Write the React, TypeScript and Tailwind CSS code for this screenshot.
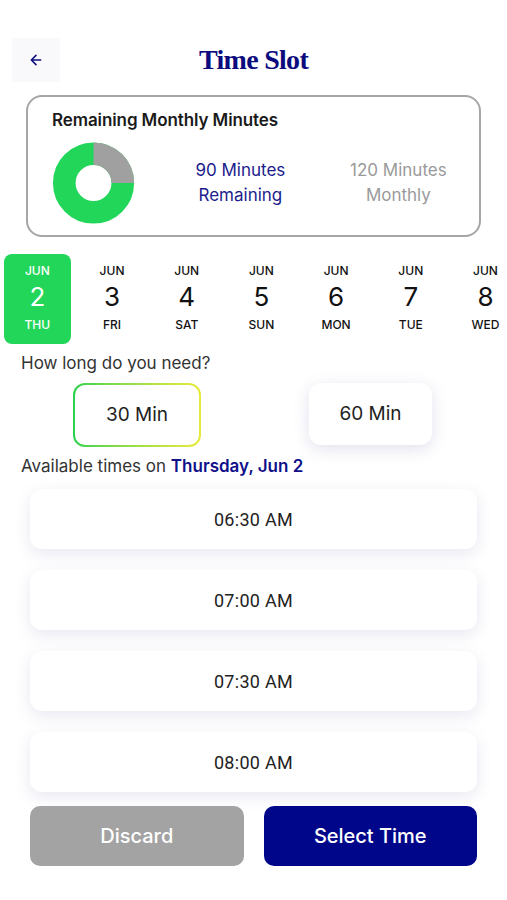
import React, { useState } from "react";

const days = [
  { n: "2", d: "THU" },
  { n: "3", d: "FRI" },
  { n: "4", d: "SAT" },
  { n: "5", d: "SUN" },
  { n: "6", d: "MON" },
  { n: "7", d: "TUE" },
  { n: "8", d: "WED" },
];

const times = ["06:30 AM", "07:00 AM", "07:30 AM", "08:00 AM"];

const Donut = () => {
  const r = 31;
  const c = 2 * Math.PI * r;
  return (
    <svg width="88" height="88" viewBox="0 0 88 88">
      <circle cx="44" cy="44" r={r} fill="none" stroke="#22d65a" strokeWidth="24" />
      <circle
        cx="44"
        cy="44"
        r={r}
        fill="none"
        stroke="#a0a0a0"
        strokeWidth="24"
        strokeDasharray={`${c * 0.25} ${c}`}
        transform="rotate(-90 44 44)"
      />
    </svg>
  );
};

const App = () => {
  const [day, setDay] = useState(0);
  const [len, setLen] = useState(30);

  return (
    <div className="w-[507px] h-[900px] bg-white overflow-hidden font-['Inter',sans-serif] text-[#222]">
      <div className="relative flex items-center justify-center h-[40px] mt-[40px]">
        <button className="absolute left-[12px] top-[-2px] w-[48px] h-[44px] bg-[#f9f9fb] flex items-center justify-center text-[#101080]">
          <svg width="16" height="16" viewBox="0 0 24 24" fill="none" stroke="currentColor" strokeWidth="2.4" strokeLinecap="round" strokeLinejoin="round">
            <path d="M19 12H5M12 19l-7-7 7-7" />
          </svg>
        </button>
        <h1 className="font-['Liberation_Serif',serif] font-bold text-[28px] text-[#0b0b7e] tracking-tight">Time Slot</h1>
      </div>

      <div className="mx-[26px] mt-[15px] h-[142px] border-2 border-[#a6a6a6] rounded-[16px] px-[24px] pt-[11px]">
        <p className="text-[17px] font-semibold text-[#1a1a1a] tracking-[-0.1px]">Remaining Monthly Minutes</p>
        <div className="flex items-center mt-[5px]">
          <Donut />
          <div className="ml-[44px] w-[130px] text-center text-[17px] leading-[25px] text-[#1c1c8c]">
            <p>90 Minutes</p>
            <p>Remaining</p>
          </div>
          <div className="ml-[40px] w-[120px] text-center text-[17px] leading-[25px] text-[#9a9a9a]">
            <p>120 Minutes</p>
            <p>Monthly</p>
          </div>
        </div>
      </div>

      <div className="flex mt-[17px]">
        {days.map((x, i) => (
          <button
            key={x.n}
            onClick={() => setDay(i)}
            className="w-[74.7px] shrink-0 px-[4px]"
          >
            <div
              className={`h-[90px] rounded-[8px] flex flex-col items-center pt-[9px] ${
                day === i ? "bg-[#22d65a] text-white" : "text-[#111]"
              }`}
            >
              <span className="text-[12px] leading-[15px] font-medium">JUN</span>
              <span className="text-[26px] leading-[36px] mt-[1px]">{x.n}</span>
              <span className="text-[12px] leading-[15px] font-medium mt-[2px]">{x.d}</span>
            </div>
          </button>
        ))}
      </div>

      <p className="ml-[21px] mt-[8px] text-[17px] leading-[22px] text-[#333]">How long do you need?</p>

      <div className="flex mt-[9px] ml-[73px] gap-[108px]">
        <button
          onClick={() => setLen(30)}
          className={`w-[128px] h-[64px] rounded-[12px] p-[2px] ${
            len === 30 ? "bg-gradient-to-r from-[#27d24e] to-[#e8ea3a]" : "bg-white shadow-[0_4px_16px_rgba(90,90,160,0.18)]"
          }`}
        >
          <div className="w-full h-full bg-white rounded-[10px] flex items-center justify-center text-[19px] text-[#222]">30 Min</div>
        </button>
        <button
          onClick={() => setLen(60)}
          className={`w-[123px] h-[62px] rounded-[12px] p-[2px] ${
            len === 60 ? "bg-gradient-to-r from-[#27d24e] to-[#e8ea3a]" : "bg-white shadow-[0_4px_16px_rgba(90,90,160,0.18)]"
          }`}
        >
          <div className="w-full h-full bg-white rounded-[10px] flex items-center justify-center text-[19px] text-[#222]">60 Min</div>
        </button>
      </div>

      <p className="ml-[21px] mt-[8px] text-[17px] leading-[22px] text-[#333]">
        Available times on <span className="font-semibold text-[#10108a]">Thursday, Jun 2</span>
      </p>

      <div className="flex flex-col gap-[21px] mx-[30px] mt-[12px]">
        {times.map((t) => (
          <button
            key={t}
            className="h-[60px] rounded-[12px] bg-white shadow-[0_5px_16px_rgba(90,90,160,0.14)] font-['Roboto',sans-serif] text-[18px] text-[#222] tracking-[0.3px]"
          >
            {t}
          </button>
        ))}
      </div>

      <div className="flex gap-[20px] mx-[30px] mt-[14px]">
        <button className="flex-1 h-[60px] rounded-[10px] bg-[#a3a3a3] text-white text-[20px] font-medium">Discard</button>
        <button className="flex-1 h-[60px] rounded-[10px] bg-[#00068a] text-white text-[20px] font-medium">Select Time</button>
      </div>
    </div>
  );
};

export default App;
